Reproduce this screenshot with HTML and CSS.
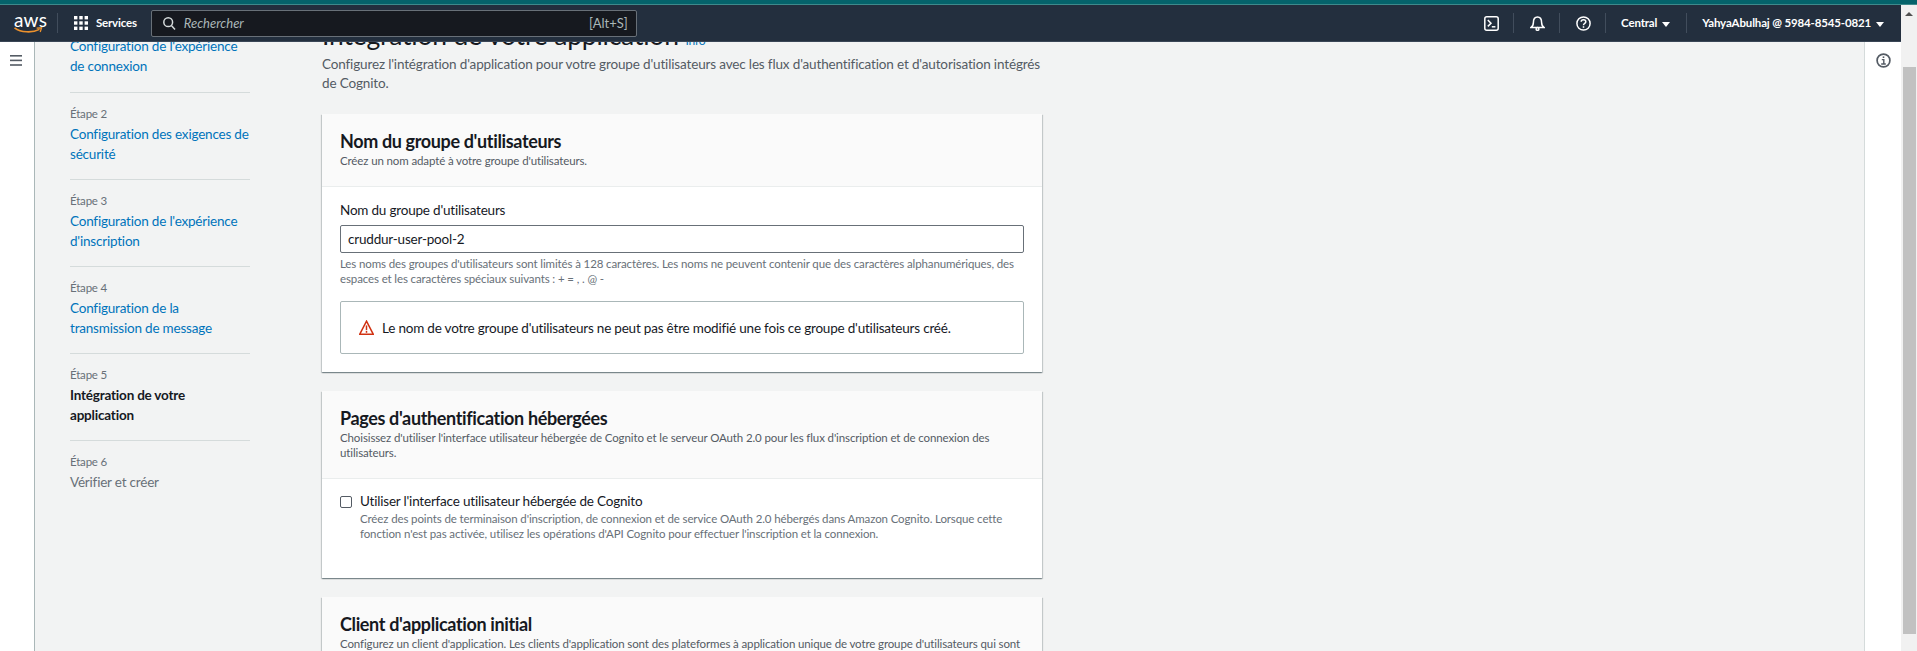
FILE: index.html
```html
<!DOCTYPE html>
<html lang="fr">

<head>
    <meta charset="UTF-8">
    <meta name="viewport" content="width=device-width, initial-scale=1.0">
    <link rel="stylesheet" href="styles.css">
    <title>Cognito</title>
</head>

<body>
    <div class="strip"></div>
    <div class="window">
        <div class="viewport">
            <header class="topbar">
                <div class="logo">
                    <span class="logo-text">aws</span>
                    <svg width="29" height="7" viewBox="0 0 29 7" fill="none" stroke="#ec912d">
                        <path d="M0.5 0.8 C7 5.6 18 6.2 25.5 2.4" stroke-width="1.6" />
                        <path d="M22.6 1.2 L27.6 0.8 L26.2 5" stroke-width="1.3" />
                    </svg>
                </div>
                <span class="bar-sep logo-sep"></span>
                <svg class="grid-icon" width="14" height="14" viewBox="0 0 14 14" fill="#fff">
                    <rect x="0" y="0" width="3.4" height="3.4" /><rect x="5.3" y="0" width="3.4" height="3.4" /><rect x="10.6" y="0" width="3.4" height="3.4" />
                    <rect x="0" y="5.3" width="3.4" height="3.4" /><rect x="5.3" y="5.3" width="3.4" height="3.4" /><rect x="10.6" y="5.3" width="3.4" height="3.4" />
                    <rect x="0" y="10.6" width="3.4" height="3.4" /><rect x="5.3" y="10.6" width="3.4" height="3.4" /><rect x="10.6" y="10.6" width="3.4" height="3.4" />
                </svg>
                <span class="services">Services</span>
                <div class="search">
                    <svg width="13" height="13" viewBox="0 0 13 13" fill="none" stroke="#d5dbdb" stroke-width="1.5">
                        <circle cx="5.2" cy="5.2" r="4.4" />
                        <line x1="8.4" y1="8.6" x2="12" y2="12.4" />
                    </svg>
                    <span class="search-text">Rechercher</span>
                    <span class="search-key">[Alt+S]</span>
                </div>
                <div class="bar-right">
                    <svg class="bar-icon" width="15" height="15" viewBox="0 0 15 15" fill="none" stroke="#fff" stroke-width="1.5">
                        <rect x="0.8" y="0.8" width="13.4" height="13.4" rx="2" />
                        <path d="M3.8 4 L7 7.2 L3.8 10.4" />
                        <line x1="7.8" y1="10.8" x2="11.4" y2="10.8" />
                    </svg>
                    <span class="bar-sep"></span>
                    <svg class="bar-icon" width="15" height="15" viewBox="0 0 15 15" fill="none" stroke="#fff" stroke-width="1.5">
                        <path d="M0.8 11.6 C2.6 10.4 3.4 9 3.4 6.4 C3.4 3 5.2 0.9 7.5 0.9 C9.8 0.9 11.6 3 11.6 6.4 C11.6 9 12.4 10.4 14.2 11.6 Z" />
                        <circle cx="7.5" cy="12.9" r="1.4" />
                    </svg>
                    <span class="bar-sep"></span>
                    <svg class="bar-icon" width="15" height="15" viewBox="0 0 15 15" fill="none" stroke="#fff" stroke-width="1.5">
                        <circle cx="7.5" cy="7.5" r="6.6" />
                        <path d="M5.2 5.8 C5.2 3 9.8 3 9.8 5.8 C9.8 7.5 7.5 7.4 7.5 9.2" />
                        <line x1="7.5" y1="10.2" x2="7.5" y2="11.8" />
                    </svg>
                    <span class="bar-sep"></span>
                    <span class="bar-text">Central</span><span class="caret"></span>
                    <span class="bar-sep"></span>
                    <span class="bar-text">YahyaAbulhaj @ 5984-8545-0821</span><span class="caret"></span>
                </div>
            </header>

            <div class="layout">
                <div class="rail rail-left">
                    <svg width="12" height="11" viewBox="0 0 12 11" fill="#545b64">
                        <rect y="0" width="12" height="1.6" /><rect y="4.6" width="12" height="1.6" /><rect y="9.2" width="12" height="1.6" />
                    </svg>
                </div>

                <nav class="steps">
                    <div class="step step-first">
                        <a class="step-link">Configuration de l'expérience de connexion</a>
                    </div>
                    <div class="step">
                        <small>Étape 2</small>
                        <a class="step-link">Configuration des exigences de sécurité</a>
                    </div>
                    <div class="step">
                        <small>Étape 3</small>
                        <a class="step-link">Configuration de l'expérience d'inscription</a>
                    </div>
                    <div class="step">
                        <small>Étape 4</small>
                        <a class="step-link">Configuration de la transmission de message</a>
                    </div>
                    <div class="step">
                        <small>Étape 5</small>
                        <b class="step-current">Intégration de votre application</b>
                    </div>
                    <div class="step">
                        <small>Étape 6</small>
                        <span class="step-off">Vérifier et créer</span>
                    </div>
                </nav>

                <main class="content">
                    <h1>Intégration de votre application <a class="info">Info</a></h1>
                    <p class="lead">Configurez l'intégration d'application pour votre groupe d'utilisateurs avec les flux d'authentification et d'autorisation intégrés de Cognito.</p>

                    <section class="card">
                        <div class="card-head">
                            <h2>Nom du groupe d'utilisateurs</h2>
                            <p>Créez un nom adapté à votre groupe d'utilisateurs.</p>
                        </div>
                        <div class="card-body">
                            <label class="field-label">Nom du groupe d'utilisateurs</label>
                            <div class="input">cruddur-user-pool-2</div>
                            <p class="hint">Les noms des groupes d'utilisateurs sont limités à 128 caractères. Les noms ne peuvent contenir que des caractères alphanumériques, des espaces et les caractères spéciaux suivants : + = , . @ -</p>
                            <div class="alert">
                                <svg width="15" height="15" viewBox="0 0 15 15" fill="none" stroke="#d13212" stroke-width="1.5">
                                    <path d="M7.5 1.2 L14.2 14.2 H0.8 Z" />
                                    <line x1="7.5" y1="5.4" x2="7.5" y2="10.2" />
                                    <line x1="7.5" y1="11" x2="7.5" y2="12.8" />
                                </svg>
                                <span>Le nom de votre groupe d'utilisateurs ne peut pas être modifié une fois ce groupe d'utilisateurs créé.</span>
                            </div>
                        </div>
                    </section>

                    <section class="card">
                        <div class="card-head">
                            <h2>Pages d'authentification hébergées</h2>
                            <p>Choisissez d'utiliser l'interface utilisateur hébergée de Cognito et le serveur OAuth 2.0 pour les flux d'inscription et de connexion des utilisateurs.</p>
                        </div>
                        <div class="card-body check-body">
                            <span class="checkbox"></span>
                            <div>
                                <div class="check-label">Utiliser l'interface utilisateur hébergée de Cognito</div>
                                <p class="check-hint">Créez des points de terminaison d'inscription, de connexion et de service OAuth 2.0 hébergés dans Amazon Cognito. Lorsque cette fonction n'est pas activée, utilisez les opérations d'API Cognito pour effectuer l'inscription et la connexion.</p>
                            </div>
                        </div>
                    </section>

                    <section class="card">
                        <div class="card-head">
                            <h2>Client d'application initial</h2>
                            <p>Configurez un client d'application. Les clients d'application sont des plateformes à application unique de votre groupe d'utilisateurs qui sont</p>
                        </div>
                    </section>
                </main>

                <div class="rail rail-right">
                    <svg width="15" height="15" viewBox="0 0 15 15" fill="none" stroke="#545b64" stroke-width="1.7">
                        <circle cx="7.5" cy="7.5" r="6.4" />
                        <rect x="6.7" y="3.4" width="1.6" height="1.6" fill="#545b64" stroke="none" />
                        <path d="M5.8 6.6 H7.8 V10.8 M5.2 11 H9.8" stroke-width="1.4" />
                    </svg>
                </div>
            </div>
        </div>

        <div class="scrollbar">
            <span class="scroll-up"></span>
            <span class="scroll-thumb"></span>
        </div>
    </div>
</body>

</html>
```

FILE: styles.css
```css
* {
    box-sizing: border-box;
}

html,
body {
    margin: 0;
    height: 100%;
    overflow: hidden;
}

body {
    background-color: #f2f3f3;
    color: #16191f;
    font-family: Lato, "Liberation Sans", sans-serif;
    font-size: 13.5px;
    letter-spacing: -0.2px;
    line-height: 20px;
}

.strip {
    height: 5px;
    background-color: #05636b;
    border-bottom: 1px solid #3d8a8c;
}

.window {
    height: 646px;
    display: flex;
}

.viewport {
    flex: 1;
    min-width: 0;
    display: flex;
    flex-direction: column;
    overflow: hidden;
}

/* top bar */
.topbar {
    position: relative;
    z-index: 2;
    height: 37px;
    flex: none;
    display: flex;
    align-items: center;
    padding: 0 17px 0 14px;
    background-color: #232f3e;
    border-bottom: 1px solid #3a4656;
    color: #fff;
}

.logo {
    display: flex;
    flex-direction: column;
    width: 29px;
}

.logo-text {
    font-size: 19px;
    line-height: 13px;
    letter-spacing: 0.2px;
}

.logo svg {
    margin-top: 1px;
}

.logo-sep {
    margin: 0 16px 0 14px;
}

.bar-sep {
    width: 1px;
    height: 20px;
    background-color: #414d5c;
}

.services {
    margin: 0 14px 0 8px;
    font-size: 11.5px;
    font-weight: 700;
}

.search {
    width: 486px;
    height: 27px;
    display: flex;
    align-items: center;
    padding: 0 8px 0 11px;
    background-color: #16191f;
    border: 1px solid #687078;
    border-radius: 2px;
}

.search-text {
    flex: 1;
    margin-left: 8px;
    color: #aab7b8;
    font-size: 13px;
    font-style: italic;
    letter-spacing: 0;
}

.search-key {
    color: #aab7b8;
    font-size: 13px;
    letter-spacing: 0;
}

.bar-right {
    margin-left: auto;
    display: flex;
    align-items: center;
}

.bar-icon {
    margin: 0 14px 0 16px;
}

.bar-text {
    margin-left: 15px;
    font-size: 11.5px;
    font-weight: 700;
    letter-spacing: -0.15px;
}

.caret {
    width: 0;
    height: 0;
    margin: 2px 16px 0 5px;
    border-left: 4px solid transparent;
    border-right: 4px solid transparent;
    border-top: 5px solid #fff;
}

.bar-right .caret:last-child {
    margin-right: 0;
}

/* page columns */
.layout {
    flex: 1;
    min-height: 0;
    display: flex;
    overflow: hidden;
}

.rail {
    flex: none;
    display: flex;
    justify-content: center;
    align-items: flex-start;
    background-color: #fff;
}

.rail-left {
    width: 35px;
    padding: 13px 2px 0 0;
    border-right: 1px solid #aab7b8;
}

.rail-right {
    width: 37px;
    margin-left: auto;
    padding-top: 11px;
    border-left: 1px solid #d5dbdb;
}

/* wizard steps */
.steps {
    flex: none;
    width: 180px;
    margin: -6px 72px 0 35px;
}

.step {
    padding: 11px 0 15px;
    border-bottom: 1px solid #d5dbdb;
}

.step-first {
    padding: 0 0 16px;
}

.step:last-child {
    border-bottom: 0;
}

.step small {
    display: block;
    color: #687078;
    font-size: 11.5px;
    line-height: 20px;
}

.step-link {
    color: #0073bb;
}

.step-current {
    font-weight: 700;
}

.step-off {
    color: #687078;
}

/* main column */
.content {
    flex: none;
    width: 720px;
    margin-top: -25px;
}

h1 {
    margin: 0;
    font-size: 26.5px;
    font-weight: 400;
    line-height: 36px;
}

.info {
    color: #0073bb;
    font-size: 12px;
    line-height: 1;
}

.lead {
    margin: 2px 0 0;
    color: #545b64;
    letter-spacing: -0.15px;
    line-height: 19px;
}

.card {
    margin-top: 21px;
    background-color: #fff;
    box-shadow: 0 1px 1px 0 rgba(0, 28, 36, 0.3), 1px 1px 1px 0 rgba(0, 28, 36, 0.15), -1px 1px 1px 0 rgba(0, 28, 36, 0.15);
}

.card + .card {
    margin-top: 19px;
}

.card-head {
    padding: 15px 18px 18px;
    background-color: #fafafa;
    border-bottom: 1px solid #eaeded;
}

.card-head h2 {
    margin: 0;
    font-size: 18px;
    font-weight: 700;
    letter-spacing: -0.36px;
    line-height: 24px;
}

.card-head p {
    margin: 0;
    color: #545b64;
    font-size: 11.5px;
    letter-spacing: -0.12px;
    line-height: 15px;
}

.card-body {
    padding: 13px 18px 18px;
}

.field-label {
    display: block;
    line-height: 20px;
}

.input {
    height: 28px;
    margin-top: 5px;
    padding: 0 7px;
    background-color: #fff;
    border: 1px solid #687078;
    border-radius: 2px;
    line-height: 26px;
}

.hint {
    margin: 3px 0 0;
    color: #687078;
    font-size: 11.5px;
    letter-spacing: -0.12px;
    line-height: 15px;
}

.alert {
    display: flex;
    align-items: center;
    gap: 8px;
    height: 53px;
    margin-top: 15px;
    padding: 0 18px;
    border: 1px solid #aab7b8;
    border-radius: 2px;
}

.check-body {
    display: flex;
    gap: 8px;
    padding-top: 12px;
    padding-bottom: 37px;
}

.checkbox {
    flex: none;
    width: 12px;
    height: 12px;
    margin-top: 5px;
    border: 1px solid #545b64;
    border-radius: 2px;
}

.check-hint {
    margin: 0;
    color: #687078;
    font-size: 11.5px;
    letter-spacing: -0.12px;
    line-height: 15px;
}

/* scrollbar */
.scrollbar {
    flex: none;
    width: 16px;
    display: flex;
    flex-direction: column;
    align-items: center;
    background-color: #f1f1f1;
}

.scroll-up {
    width: 0;
    height: 0;
    margin-top: 7px;
    border-left: 4px solid transparent;
    border-right: 4px solid transparent;
    border-bottom: 4px solid #505050;
}

.scroll-thumb {
    flex: 1;
    width: 13px;
    margin: 51px 0 17px;
    background-color: #c1c1c1;
}
```
